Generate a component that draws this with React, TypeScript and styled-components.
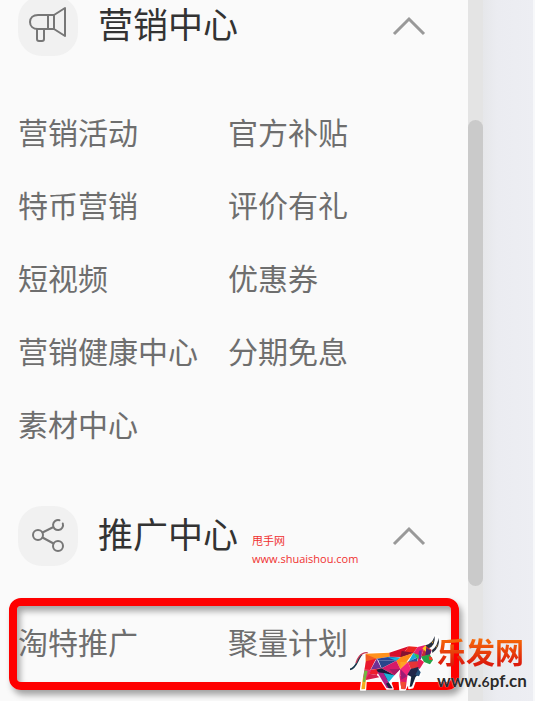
import React from "react";
import styled, { createGlobalStyle } from "styled-components";

const GlobalStyle = createGlobalStyle`
  * { box-sizing: border-box; }
  body {
    margin: 0;
    background: #fafafa;
    font-family: "Noto Sans CJK SC", sans-serif;
  }
`;

const Page = styled.div`
  position: relative;
  display: flex;
  height: 100vh;
  overflow: hidden;
`;

const Sidebar = styled.nav`
  flex: 1;
  min-width: 0;
  background: #fafafa;
`;

const Track = styled.div`
  width: 15px;
  padding-top: 120px;
  background: #e4e4e4;
`;

const Thumb = styled.div`
  height: 466px;
  border-radius: 8px;
  background: #cacaca;
`;

const Backdrop = styled.div`
  width: 52px;
  border-right: 2px solid #f7f8fa;
  background: linear-gradient(to right, #e6e7ea, #ebecf1 14px, #edeef3);
`;

const Section = styled.section<{ $offset: number }>`
  margin-top: ${(p) => p.$offset}px;
`;

const Header = styled.header`
  position: relative;
  display: flex;
  align-items: center;
  height: 60px;
  padding: 0 42px 0 18px;
`;

const IconTile = styled.span`
  display: flex;
  align-items: center;
  justify-content: center;
  width: 60px;
  height: 60px;
  border-radius: 24px;
  background: #f1f1f1;
  color: #777;
`;

const Title = styled.h2`
  flex: 1;
  margin: 0 0 0 20px;
  padding-bottom: 6px;
  color: #333;
  font-size: 35px;
  font-weight: 400;
  line-height: 52px;
`;

const Toggle = styled.button`
  display: flex;
  padding: 0;
  border: 0;
  background: none;
  color: #999;
  cursor: pointer;
`;

const Links = styled.div`
  display: grid;
  grid-template-columns: 210px 1fr;
  grid-auto-rows: 73px;
  align-items: center;
  padding: 38px 18px 3px;
`;

const Highlight = styled.div`
  display: grid;
  grid-template-columns: 210px 1fr;
  align-items: center;
  height: 92px;
  margin: 32px 9px 0;
  padding: 0 1px 6px;
  border: 8px solid #fe0000;
  border-radius: 12px;
  box-shadow: 3px 5px 6px rgba(0, 0, 0, 0.35), inset 3px 5px 6px rgba(0, 0, 0, 0.35);
`;

const Item = styled.a`
  color: #6e6e6e;
  font-size: 30px;
  line-height: 44px;
  white-space: nowrap;
  text-decoration: none;
`;

const SiteNote = styled.div`
  position: absolute;
  top: 26px;
  left: 252px;
  color: #f03030;
  font-family: "Open Sans", "Noto Sans CJK SC", sans-serif;
  font-size: 11px;
  line-height: 18px;
`;

const Brand = styled.div`
  position: absolute;
  right: 8px;
  bottom: 6px;
  display: flex;
  align-items: flex-end;
`;

const BrandText = styled.div`
  width: 90px;
  margin-left: -8px;
  padding-bottom: 4px;
`;

const BrandName = styled.div`
  background: linear-gradient(to bottom, #f66a08 20%, #dc1c0c 80%);
  background-clip: text;
  color: transparent;
  font-size: 29px;
  font-weight: 700;
  line-height: 42px;
`;

const BrandUrl = styled.div`
  color: #2b2b2b;
  font-family: Lato, sans-serif;
  font-size: 17px;
  font-weight: 700;
  line-height: 18px;
  text-shadow: 0 0 1px #fff;
`;

const SmallDigit = styled.span`
  font-size: 14px;
`;

const Megaphone = () => (
  <svg width="40" height="40" viewBox="0 0 40 40" fill="none" stroke="currentColor" strokeWidth="2" strokeLinejoin="round">
    <path d="M26 9H10C5 9 2 12 2 16s3 7 8 7h16z" />
    <path d="M20 9v14M26 9l11-7v28l-11-7zM9 23v10q0 2 2 2h3q2 0 2-2V23" />
  </svg>
);

const Share = () => (
  <svg width="40" height="40" viewBox="0 0 40 40" fill="none" stroke="currentColor" strokeWidth="2" strokeLinecap="round">
    <circle cx="10" cy="19" r="5" />
    <circle cx="30" cy="30" r="5" />
    <path d="M34.800 7.500A5 5 0 1 1 31.500 4.300M14.500 16.500 25.500 11M14.500 21.500 25.500 27.500" />
  </svg>
);

const Chevron = () => (
  <svg width="34" height="20" viewBox="0 0 34 20" fill="none" stroke="currentColor" strokeWidth="3">
    <path d="M2 18 17 3l15 15" />
  </svg>
);

const Bull = () => (
  <svg width="95" height="70" viewBox="0 0 285 210" aria-hidden="true">
    <path d="M0 134C20 132 23 95 38 86q8-5 15-1" fill="none" stroke="#fff" strokeWidth="9" />
    <path d="M45 86 118 82 176 63 203 65 226 59 248 45 256 32 267 33 266 52 251 72 244 87 251 105 241 120 222 112 210 131 212 153 197 163 188 188 177 190 176 172 165 195H150l-3-43-25 21 7 19h-18L88 157l-40 8-2 30H32l5-42 8-20z" fill="#fff" stroke="#fff" strokeWidth="5" strokeLinejoin="round" />
    <path d="M0 133C20 131 23 98 36 88" fill="none" stroke="#18384c" strokeWidth="5" />
    <path d="M18 114Q25 92 38 86t15-1" fill="none" stroke="#c63b58" strokeWidth="4" />
    <path d="M47 86 119 83 119 95 80 101 48 109z" fill="#ff921c" />
    <path d="M47 88 80 101 47 133z" fill="#f25b20" />
    <path d="M48 109 78 101 61 135 43 134z" fill="#e9182d" />
    <path d="M118 83 176 64 153 96 119 95z" fill="#d80e2c" />
    <path d="M176 64 203 66 190 84 153 96z" fill="#ed251f" />
    <path d="M155 78 192 83 151 98z" fill="#851331" />
    <path d="M203 66 226 60 213 96 190 84z" fill="#e61f70" />
    <path d="M226 60 245 75 240 90 213 96z" fill="#c52b36" />
    <path d="M217 70 228 61 229 82z" fill="#ffca1b" />
    <path d="M229 69 244 78 238 92 226 90z" fill="#4d236b" />
    <path d="M213 95 239 88 249 105 240 118 222 111z" fill="#25a447" />
    <path d="M236 94 246 97 248 105 238 105z" fill="#ef3e29" />
    <path d="M207 77 215 76 213 101 203 112z" fill="#7e229a" />
    <path d="M80 101 119 95 151 98 139 107 85 106z" fill="#264399" />
    <path d="M80 101 94 130 62 134z" fill="#703092" />
    <path d="M85 106 139 107 95 130z" fill="#29468b" />
    <path d="M112 97 151 98 139 107z" fill="#15b4df" />
    <path d="M139 107 153 96 190 84 170 110 151 132z" fill="#ff8c16" />
    <path d="M190 84 202 97 175 111z" fill="#12acde" />
    <path d="M190 84 207 90 206 109 200 98z" fill="#34ba55" />
    <path d="M174 110 201 98 205 123 185 132z" fill="#2b539d" />
    <path d="M95 130 139 107 151 132 133 151z" fill="#d71a68" />
    <path d="M62 134 95 130 80 150 49 145z" fill="#ee1e2d" />
    <path d="M49 145 80 150 88 157 48 165z" fill="#d91f4c" />
    <path d="M79 134 95 130 133 151 106 171z" fill="#161c3d" />
    <path d="M82 142 101 144 125 190 110 189z" fill="#ac2085" />
    <path d="M101 144 133 151 116 172z" fill="#17b5d8" />
    <path d="M116 172 128 190 116 190 108 176z" fill="#1c2342" />
    <path d="M118 132 151 132 133 151z" fill="#a51c66" />
    <path d="M151 132 174 110 182 132 172 154 148 151z" fill="#f42678" />
    <path d="M151 111 174 110 151 132z" fill="#ffa324" />
    <path d="M174 110 206 109 206 130 182 132z" fill="#e53437" />
    <path d="M205 99 222 111 209 132 202 126z" fill="#e81e54" />
    <path d="M148 151 172 154 167 191H154z" fill="#e31b68" />
    <path d="M151 132 172 154 154 164z" fill="#9d1c75" />
    <path d="M182 132 205 126 208 148 191 159 172 149z" fill="#202749" />
    <path d="M184 154 199 149 186 184 179 186z" fill="#17283e" />
    <path d="M205 132 212 142 207 154 196 150z" fill="#244f78" />
    <path d="M43 134 64 136 48 162 39 158z" fill="#e72a75" />
    <path d="M39 156 48 161 45 192 34 193z" fill="#f5aa1b" />
    <path d="M43 136 53 138 45 171 39 170z" fill="#71b842" />
    <path d="M151 170 168 171 165 193 154 192z" fill="#f04c32" />
    <path d="M226 61Q246 58 254 33q3 29-18 37zM246 75Q264 61 265 38q8 25-18 46z" fill="#27313f" />
    <path d="M245 54 251 45 248 55zM258 65 264 56 259 68z" fill="#f2a82b" />
  </svg>
);

const marketing = ["营销活动", "官方补贴", "特币营销", "评价有礼", "短视频", "优惠券", "营销健康中心", "分期免息", "素材中心"];
const promotion = ["淘特推广", "聚量计划"];

const renderItems = (labels: string[]) =>
  labels.map((label) => (
    <Item key={label} href="#">
      {label}
    </Item>
  ));

export default function App() {
  return (
    <>
      <GlobalStyle />
      <Page>
        <Sidebar>
          <Section $offset={-4}>
            <Header>
              <IconTile><Megaphone /></IconTile>
              <Title>营销中心</Title>
              <Toggle aria-label="收起营销中心"><Chevron /></Toggle>
            </Header>
            <Links>{renderItems(marketing)}</Links>
          </Section>
          <Section $offset={44}>
            <Header>
              <IconTile><Share /></IconTile>
              <Title>推广中心</Title>
              <SiteNote>
                甩手网
                <div>www.shuaishou.com</div>
              </SiteNote>
              <Toggle aria-label="收起推广中心"><Chevron /></Toggle>
            </Header>
            <Highlight>{renderItems(promotion)}</Highlight>
          </Section>
        </Sidebar>
        <Track><Thumb /></Track>
        <Backdrop />
        <Brand>
          <Bull />
          <BrandText>
            <BrandName>乐发网</BrandName>
            <BrandUrl>www.<SmallDigit>6</SmallDigit>pf.cn</BrandUrl>
          </BrandText>
        </Brand>
      </Page>
    </>
  );
}
